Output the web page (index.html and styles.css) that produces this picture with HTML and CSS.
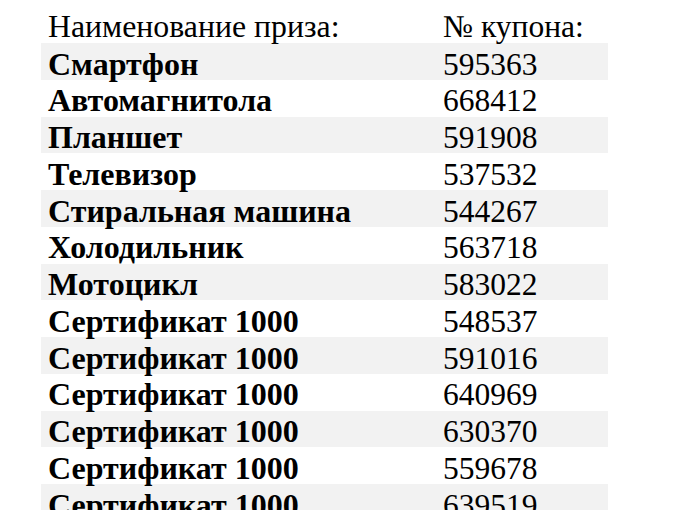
FILE: index.html
```html
<!DOCTYPE html>
<html lang="ru">
<head>
<meta charset="utf-8">
<link rel="stylesheet" href="styles.css">
</head>
<body>
<div class="table">
  <div class="row head"><div class="name">Наименование приза:</div><div class="code">№ купона:</div></div>
  <div class="row alt"><div class="name">Смартфон</div><div class="code">595363</div></div>
  <div class="row"><div class="name">Автомагнитола</div><div class="code">668412</div></div>
  <div class="row alt"><div class="name">Планшет</div><div class="code">591908</div></div>
  <div class="row"><div class="name">Телевизор</div><div class="code">537532</div></div>
  <div class="row alt"><div class="name">Стиральная машина</div><div class="code">544267</div></div>
  <div class="row"><div class="name">Холодильник</div><div class="code">563718</div></div>
  <div class="row alt"><div class="name">Мотоцикл</div><div class="code">583022</div></div>
  <div class="row"><div class="name">Сертификат 1000</div><div class="code">548537</div></div>
  <div class="row alt"><div class="name">Сертификат 1000</div><div class="code">591016</div></div>
  <div class="row"><div class="name">Сертификат 1000</div><div class="code">640969</div></div>
  <div class="row alt"><div class="name">Сертификат 1000</div><div class="code">630370</div></div>
  <div class="row"><div class="name">Сертификат 1000</div><div class="code">559678</div></div>
  <div class="row alt"><div class="name">Сертификат 1000</div><div class="code">639519</div></div>
</div>
</body>
</html>
```
FILE: styles.css
```css
html, body {
  margin: 0;
  padding: 0;
  background: #ffffff;
  overflow: hidden;
}
body {
  font-family: "Liberation Serif", "Times New Roman", serif;
  color: #000000;
  font-size: 31.5px;
}
.table {
  margin: 6.25px 0 0 41px;
  width: 567px;
}
.row {
  display: grid;
  grid-template-columns: 395px 1fr;
  align-items: baseline;
  height: 36.75px;
  line-height: 36.75px;
  box-sizing: border-box;
  padding-top: 2.5px;
}
.row.alt {
  background: #f2f2f2;
}
.name {
  padding-left: 7px;
  font-weight: bold;
  font-size: 32px;
  white-space: nowrap;
}
.head .name {
  font-weight: normal;
  font-size: 31.8px;
  padding-left: 7px;
}
.code {
  padding-left: 7px;
  white-space: nowrap;
}
```
